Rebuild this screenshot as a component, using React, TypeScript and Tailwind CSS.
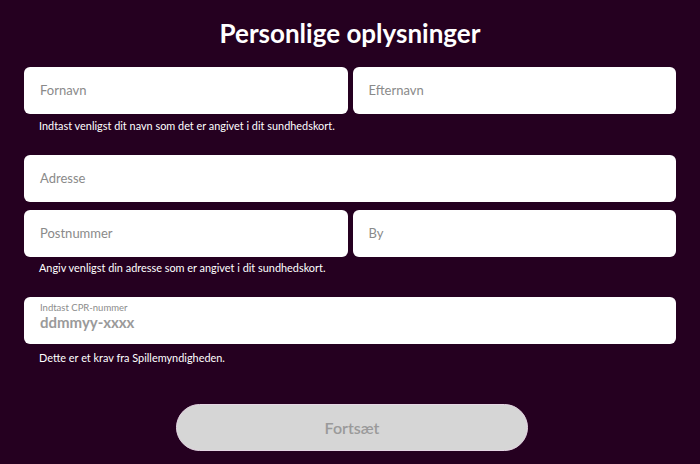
import React from "react";

export default function App() {
  const font = { fontFamily: "Lato, 'Noto Sans', sans-serif" };
  return (
    <div
      className="w-[700px] h-[464px] bg-[#250020] flex flex-col px-[24px] overflow-hidden"
      style={font}
    >
      <h1 className="mt-[17px] h-[32px] leading-[32px] text-center text-white text-[26px] font-bold">
        Personlige oplysninger
      </h1>
      <div className="mt-[18px] flex gap-[5px]">
        <Field label="Fornavn" />
        <Field label="Efternavn" />
      </div>
      <p className="mt-[6px] pl-[15px] text-[10.9px] leading-[12px] text-white">
        Indtast venligst dit navn som det er angivet i dit sundhedskort.
      </p>
      <div className="mt-[23px] flex">
        <Field label="Adresse" />
      </div>
      <div className="mt-[8px] flex gap-[5px]">
        <Field label="Postnummer" />
        <Field label="By" />
      </div>
      <p className="mt-[5px] pl-[15px] text-[10.9px] leading-[12px] text-white">
        Angiv venligst din adresse som er angivet i dit sundhedskort.
      </p>
      <div className="mt-[23px] h-[47px] bg-white rounded-[6px] flex flex-col justify-start pt-[5px] pl-[16px]">
        <span className="text-[9.5px] leading-[11px] text-[#8c8c8c]">Indtast CPR-nummer</span>
        <span className="text-[15px] leading-[18px] font-bold text-[#9a9a9a]">ddmmyy-xxxx</span>
      </div>
      <p className="mt-[8px] pl-[15px] text-[10.9px] leading-[12px] text-white">
        Dette er et krav fra Spillemyndigheden.
      </p>
      <button className="mt-[40px] ml-[152px] w-[352px] h-[47px] rounded-full bg-[#d6d6d6] border border-[#e6d6e4] text-[16px] font-semibold text-[#9a9a9a]">
        Fortsæt
      </button>
    </div>
  );
}

function Field({ label }: { label: string }) {
  return (
    <div className="flex-1 h-[47px] bg-white rounded-[6px] flex items-center pl-[16px]">
      <span className="text-[13px] text-[#8a8a8a]">{label}</span>
    </div>
  );
}
